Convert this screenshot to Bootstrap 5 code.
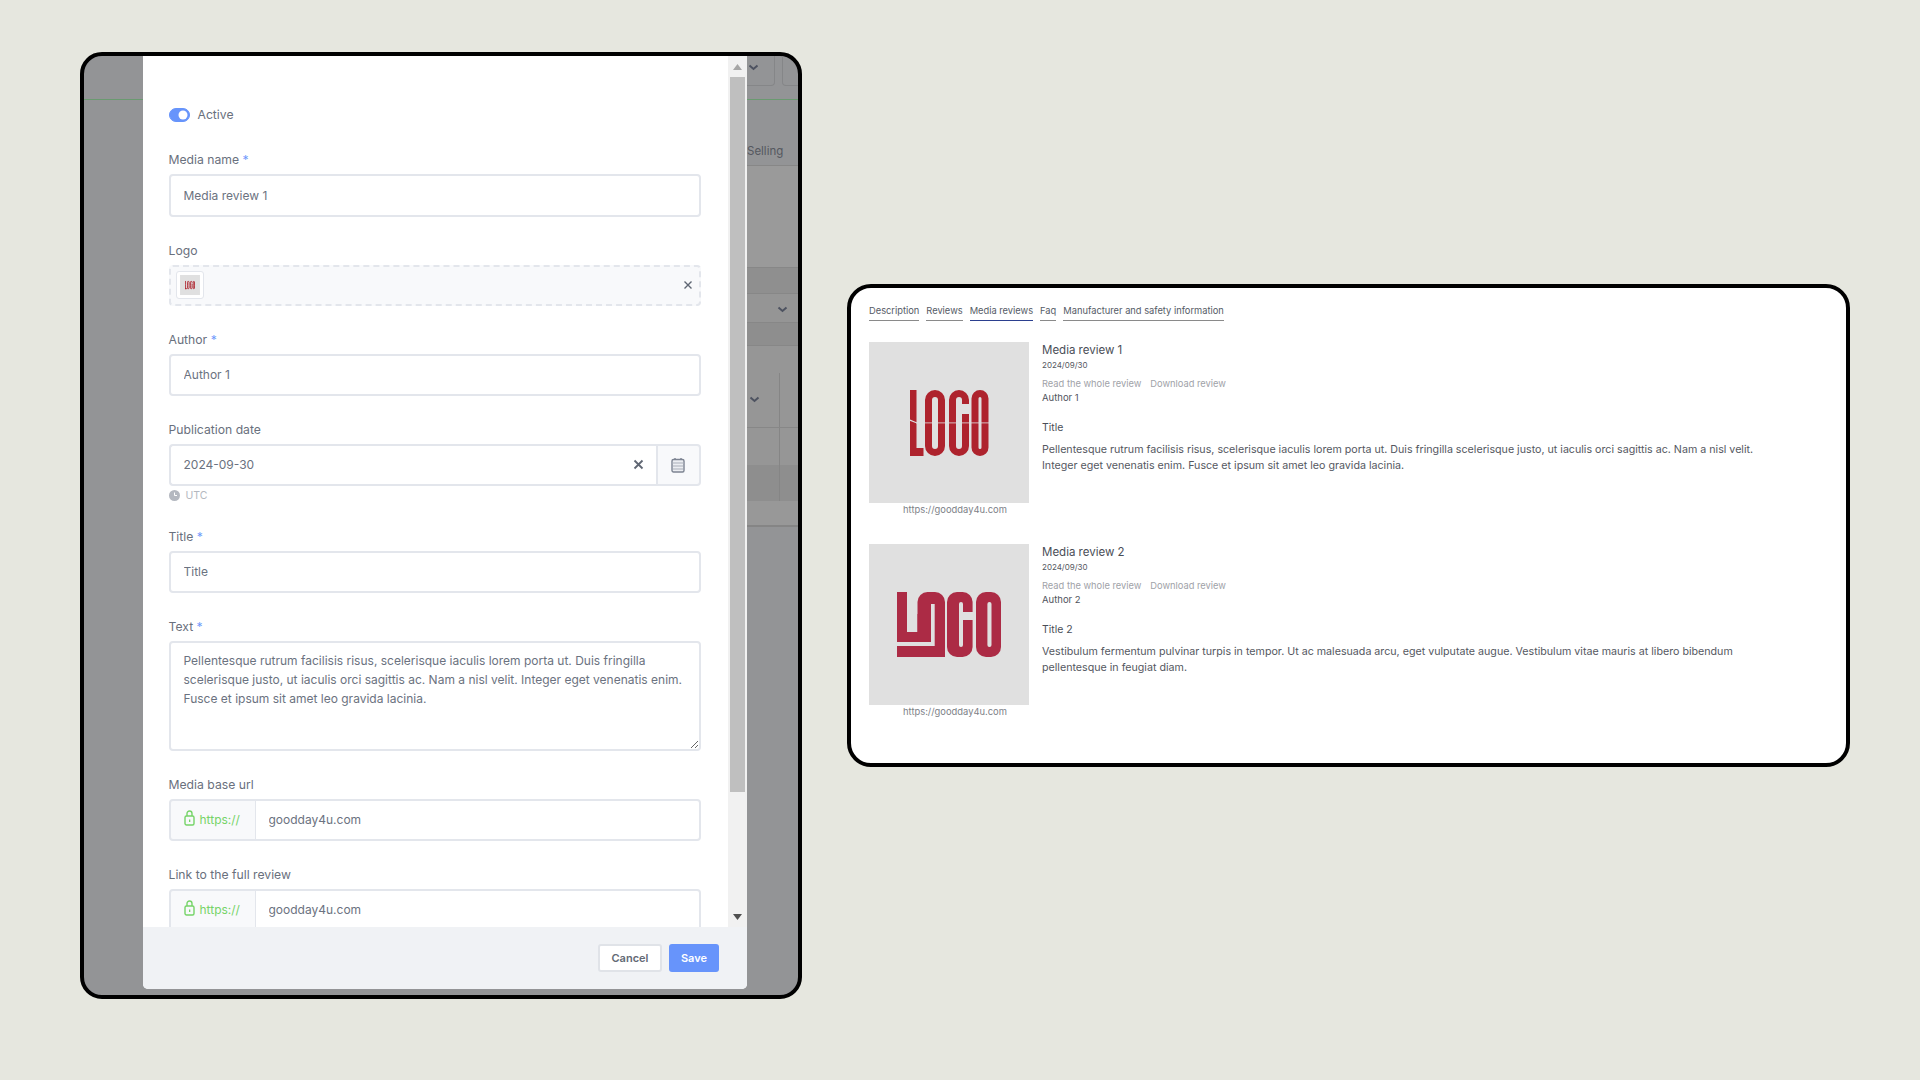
<!DOCTYPE html>
<html lang="en">
<head>
<meta charset="utf-8">
<title>Media reviews</title>
<link href="https://cdn.jsdelivr.net/npm/bootstrap@5.3.0/dist/css/bootstrap.min.css" rel="stylesheet">
<style>
html,body{height:1080px;overflow:hidden}
body{background:#e6e7df;font-family:"Inter","Liberation Sans",sans-serif;color:#444}
.stage{height:1080px;padding:0 70px 29px 80px}
.shell-l{width:722px;height:947px;border:4px solid #000;border-radius:22px;overflow:hidden;background:#939496;flex:none}
.side-l{width:59px;flex:none}
.band-top{height:44px;border-bottom:1px solid #6a9a70}
.dlg{width:604px;flex:none;height:933px;background:#fff;border-radius:0 0 5px 5px;overflow:hidden}
.dlg-scroll{height:871px;overflow:hidden}
.dlg-form{width:585px;padding:48.5px 0 0 25.5px;overflow:hidden}
.dlg-form>*{width:532px}
.sbar{width:19px;background:#f1f1f1;padding:0 2px 0 2px}
.sbar-thumb{height:715px;background:#bfbfbf;width:15px}
.sbar-up,.sbar-dn{height:21px;width:15px}
.sbar-gap{flex:1}
.dlg-foot{height:62px;background:#f0f2f5;padding:17px 28px 0 0}
.fld{margin-bottom:24px}
.fld-lab{font-size:12.2px;line-height:20px;margin-bottom:4px;color:#69707d;font-weight:400;display:block}
.req{color:#6d97fb}
.sw-row{height:20px;margin-bottom:25px;font-size:12.2px;color:#69707d;line-height:20px}
.sw-row .form-check-input{width:21px;height:14px;margin:0;float:none;background-color:#6794fb;border-color:#6794fb}
.sw-row.form-switch{padding-left:0;min-height:0}
.form-control.ctl,.ctl{height:42px;font-size:12px;color:#6b7280;border:2px solid #e3e6ec;border-radius:4px;padding:0 13px;box-shadow:none}
.form-control.ctl.ctl-tall{height:43px}
textarea.form-control.ctl{height:110px;line-height:19px;padding:8px 13px 6px;font-size:12px;color:#6b7280}
.drop{height:41px;border:2px dashed #e3e6ec;background:#f8f9fb;border-radius:4px;padding:0 6px 0 5px}
.thumb{width:28px;height:28px;border:1px solid #e3e6ec;border-radius:3px;background:#fff;padding:3px}
.ig-clear{background:#fff;border:2px solid #e3e6ec;border-left:0;padding:0 12px 0 4px}
.ig-cal{background:#f8f9fb;border:2px solid #e3e6ec;border-left:1px solid #e3e6ec;width:44px;justify-content:center;padding:0;border-radius:0 4px 4px 0}
.ig-date .ctl{border-right:0}
.ig-http{background:#f8f9fb;border:2px solid #e3e6ec;width:88px;padding:0 0 0 13px;gap:5px;font-size:12px;color:#76d468;border-radius:4px 0 0 4px}
.ig-http svg{margin-top:-3px}
.ig-url .ctl{border-left:0}
.utc{height:20px;margin-bottom:21px;font-size:10.5px;color:#b4b8c0;gap:6px}
.btn-x{font-size:11px;font-weight:600;height:28px;width:64px;padding:0;border-radius:3px}
.btn-cancel{background:#fff;border:2px solid #e0e3e8;color:#636a75}
.btn-save{background:#6794fb;border:0;color:#fff;width:50px;margin-left:7px}
.side-r{flex:1;overflow:hidden;font-size:11.5px}
.br1{height:44px;border-bottom:1px solid #6a9a70}
.ddbox{width:48px;height:30px;border:1px solid #858688;border-top:0;border-radius:0 0 4px 4px;flex:none;margin-left:-20px;padding:0 0 6px 20px}
.ddbox2{margin-left:7px;padding:0}
.br2{height:66px;padding:41px 0 0 0;border-bottom:1px solid #878787;color:#55585f;white-space:nowrap;line-height:20px}
.br3{height:102px;background:#9a9a9a;border-bottom:1px solid #878787}
.br4{height:26px;background:#8f8f8f;border-bottom:1px solid #878787}
.br5{height:29px;background:#959595;border-bottom:1px solid #878787;padding:3px 0 0 30px}
.br6{height:23px;background:#8e8e8e;border-bottom:1px solid #878787}
.br7{height:82px;background:#969696;border-bottom:1px solid #878787;padding-top:27px}
.vl{width:33px;border-right:1px solid #858585}
.vl-a{height:54px;padding:23px 0 0 2px}
.vl-b{height:100%}
.br8{height:37px;background:#969696}
.br9{height:36px;background:#8e8e8e}
.br10{height:26px;background:#989898;border-bottom:2px solid #858585}
.chev{width:11px;height:7px;display:block}
.shell-r{width:1003px;height:483px;border:4px solid #000;border-radius:24px;background:#fff;padding:16px 0 0 18px;flex:none;overflow:hidden}
.tabrow{gap:7px;margin-bottom:21px}
.tabit{font-size:9.3px;line-height:14px;color:#555b66;padding-bottom:2px;border-bottom:1px solid #8a8a8a;text-decoration:none}
.tabit.sel{border-bottom-color:#2b3f8f}
.rev{gap:13px;margin-bottom:28px}
.rev-l{width:160px;flex:none}
.rev-pic{width:160px;height:161px;background:#e0e0e0;display:block}
.rev-url{font-size:9.4px;line-height:12px;color:#7d8187;margin:1px 0 0 34px;white-space:nowrap}
.rev-r{width:730px}
.rev-name{font-size:11.5px;line-height:16px;color:#4a4e57}
.rev-date{font-size:8px;line-height:12px;margin-top:1px;color:#55585f}
.rev-links{font-size:9.3px;line-height:12px;margin-top:7px;gap:9px}
.rev-links a{color:#a0a2a8;text-decoration:none}
.rev-auth{font-size:9.5px;line-height:13px;color:#50545c;margin-top:1px}
.rev-title{font-size:10.5px;line-height:14px;margin-top:17px;color:#4a4e57}
.rev-text{font-size:10.68px;line-height:16px;margin-top:7px;color:#55585f}
</style>
</head>
<body>
<svg width="0" height="0" class="d-none" aria-hidden="true">
  <symbol id="logo-one" viewBox="0 0 160 161">
    <rect width="160" height="161" fill="#e0e0e0"/>
    <g fill="#ae232d">
      <rect x="41" y="48" width="6.500" height="66"/><rect x="41" y="106" width="13.5" height="8"/>
    </g>
    <g fill="none" stroke="#ae232d" stroke-width="7">
      <rect x="59.500" y="51.500" width="13" height="59" rx="6.500"/>
      <rect x="83.500" y="51.500" width="13" height="59" rx="6.500"/>
      <rect x="106" y="51.500" width="10" height="59" rx="5"/>
    </g>
    <rect x="92" y="62" width="9" height="10" fill="#e0e0e0"/>
    <rect x="47" y="80.500" width="75" height="0.800" fill="#e0e0e0"/>
    <polygon points="40,77 48,80.500 48,81.500 40,78.500" fill="#e0e0e0"/>
  </symbol>
  <symbol id="logo-two" viewBox="0 0 160 161">
    <rect width="160" height="161" fill="#e0e0e0"/>
    <g fill="#ac2b45">
      <rect x="28" y="48" width="10" height="50"/><rect x="28" y="88" width="34" height="10"/>
      <rect x="28" y="102" width="48" height="11"/>
      <rect x="48.500" y="48" width="27.500" height="60" rx="10"/><rect x="48.500" y="70" width="13.500" height="28"/><rect x="66" y="90" width="10" height="23"/>
      <rect x="78" y="48" width="25.600" height="65" rx="10"/>
      <rect x="107" y="48" width="25" height="65" rx="10"/>
    </g>
    <g fill="#e0e0e0">
      <rect x="62" y="60" width="3.700" height="42"/><rect x="28" y="98" width="37" height="4"/>
      <rect x="90" y="58" width="4" height="45" rx="2"/><rect x="93" y="68" width="11" height="8"/>
      <rect x="118.400" y="58" width="4.100" height="45" rx="2"/>
    </g>
  </symbol>
  <symbol id="chv" viewBox="0 0 11 7"><polyline points="1.500,1.500 5.500,5 9.500,1.500" fill="none" stroke="#4d5260" stroke-width="2"/></symbol>
  <symbol id="lk" viewBox="0 0 11 16"><rect x="1" y="6" width="9" height="9" rx="1.500" fill="none" stroke="#76d468" stroke-width="1.400"/><path d="M3 6V3.500a2.500 2.500 0 0 1 5 0V6" fill="none" stroke="#76d468" stroke-width="1.400"/><rect x="5" y="9.500" width="1.300" height="2.500" fill="#76d468"/></symbol>
</svg>
<main class="stage d-flex justify-content-between align-items-center">
  <section class="shell-l d-flex">
    <div class="side-l"><div class="band-top"></div></div>
    <div class="dlg d-flex flex-column">
      <div class="dlg-scroll d-flex">
        <form class="dlg-form">
          <div class="form-check form-switch sw-row d-flex align-items-center gap-2">
            <input class="form-check-input" type="checkbox" role="switch" id="act" checked>
            <label for="act">Active</label>
          </div>
          <div class="fld"><label class="fld-lab">Media name <span class="req">*</span></label>
            <input class="form-control ctl ctl-tall" value="Media review 1"></div>
          <div class="fld"><label class="fld-lab">Logo</label>
            <div class="drop d-flex align-items-center justify-content-between">
              <div class="thumb"><svg width="20" height="20" class="d-block"><use href="#logo-one"/></svg></div>
              <svg width="10" height="10" viewBox="0 0 10 10"><path d="M1.500 1.500l7 7M8.500 1.500l-7 7" stroke="#5f6673" stroke-width="1.400"/></svg>
            </div></div>
          <div class="fld"><label class="fld-lab">Author <span class="req">*</span></label>
            <input class="form-control ctl" value="Author 1"></div>
          <div><label class="fld-lab">Publication date</label>
            <div class="input-group ig-date">
              <input class="form-control ctl" value="2024-09-30">
              <span class="input-group-text ig-clear"><svg width="11" height="11" viewBox="0 0 11 11"><path d="M1.500 1.500l8 8M9.500 1.500l-8 8" stroke="#5f6673" stroke-width="1.800"/></svg></span>
              <span class="input-group-text ig-cal"><svg width="14" height="16" viewBox="0 0 14 16"><rect x="1" y="2.500" width="12" height="12.500" rx="1.500" fill="#eceef2" stroke="#7d8492" stroke-width="1.400"/><path d="M1 6h12M2 9h10M2 12h10" stroke="#a9aeb8"/><path d="M4 1v2M10 1v2" stroke="#7d8492" stroke-width="1.400"/></svg></span>
            </div></div>
          <div class="utc d-flex align-items-center"><svg width="11" height="11" viewBox="0 0 11 11"><circle cx="5.500" cy="5.500" r="5.500" fill="#b4b8c0"/><path d="M5.500 2.500v3h2.500" fill="none" stroke="#fff"/></svg><span>UTC</span></div>
          <div class="fld"><label class="fld-lab">Title <span class="req">*</span></label>
            <input class="form-control ctl" value="Title"></div>
          <div class="fld"><label class="fld-lab">Text <span class="req">*</span></label>
            <textarea class="form-control ctl">Pellentesque rutrum facilisis risus, scelerisque iaculis lorem porta ut. Duis fringilla scelerisque justo, ut iaculis orci sagittis ac. Nam a nisl velit. Integer eget venenatis enim. Fusce et ipsum sit amet leo gravida lacinia.</textarea></div>
          <div class="fld"><label class="fld-lab">Media base url</label>
            <div class="input-group ig-url"><span class="input-group-text ig-http"><svg width="11" height="16"><use href="#lk"/></svg>https://</span>
              <input class="form-control ctl" value="goodday4u.com"></div></div>
          <div class="fld"><label class="fld-lab">Link to the full review</label>
            <div class="input-group ig-url"><span class="input-group-text ig-http"><svg width="11" height="16"><use href="#lk"/></svg>https://</span>
              <input class="form-control ctl" value="goodday4u.com"></div></div>
        </form>
        <div class="sbar d-flex flex-column">
          <div class="sbar-up d-flex align-items-center justify-content-center"><svg width="9" height="6"><polygon points="4.500,0 9,6 0,6" fill="#a6a6a6"/></svg></div>
          <div class="sbar-thumb"></div>
          <div class="sbar-gap"></div>
          <div class="sbar-dn d-flex align-items-center justify-content-center"><svg width="9" height="6"><polygon points="0,0 9,0 4.500,6" fill="#505050"/></svg></div>
        </div>
      </div>
      <div class="dlg-foot d-flex justify-content-end align-items-start">
        <button type="button" class="btn btn-x btn-cancel">Cancel</button>
        <button type="button" class="btn btn-x btn-save">Save</button>
      </div>
    </div>
    <div class="side-r">
      <div class="br1 d-flex">
        <div class="ddbox d-flex align-items-center"><svg class="chev"><use href="#chv"/></svg></div>
        <div class="ddbox ddbox2"></div>
      </div>
      <div class="br2">Selling</div>
      <div class="br3"></div>
      <div class="br4"></div>
      <div class="br5 d-flex align-items-center"><svg class="chev"><use href="#chv"/></svg></div>
      <div class="br6"></div>
      <div class="br7"><div class="vl vl-a"><svg class="chev"><use href="#chv"/></svg></div></div>
      <div class="br8"><div class="vl vl-b"></div></div>
      <div class="br9"><div class="vl vl-b"></div></div>
      <div class="br10"></div>
    </div>
  </section>

  <section class="shell-r">
    <nav class="tabrow d-flex">
      <a class="tabit" href="#">Description</a>
      <a class="tabit" href="#">Reviews</a>
      <a class="tabit sel" href="#">Media reviews</a>
      <a class="tabit" href="#">Faq</a>
      <a class="tabit" href="#">Manufacturer and safety information</a>
    </nav>
    <article class="rev d-flex">
      <div class="rev-l"><svg class="rev-pic"><use href="#logo-one"/></svg><div class="rev-url">https://goodday4u.com</div></div>
      <div class="rev-r">
        <div class="rev-name">Media review 1</div>
        <div class="rev-date">2024/09/30</div>
        <div class="rev-links d-flex"><a href="#">Read the whole review</a><a href="#">Download review</a></div>
        <div class="rev-auth">Author 1</div>
        <div class="rev-title">Title</div>
        <div class="rev-text">Pellentesque rutrum facilisis risus, scelerisque iaculis lorem porta ut. Duis fringilla scelerisque justo, ut iaculis orci sagittis ac. Nam a nisl velit. Integer eget venenatis enim. Fusce et ipsum sit amet leo gravida lacinia.</div>
      </div>
    </article>
    <article class="rev d-flex">
      <div class="rev-l"><svg class="rev-pic"><use href="#logo-two"/></svg><div class="rev-url">https://goodday4u.com</div></div>
      <div class="rev-r">
        <div class="rev-name">Media review 2</div>
        <div class="rev-date">2024/09/30</div>
        <div class="rev-links d-flex"><a href="#">Read the whole review</a><a href="#">Download review</a></div>
        <div class="rev-auth">Author 2</div>
        <div class="rev-title">Title 2</div>
        <div class="rev-text">Vestibulum fermentum pulvinar turpis in tempor. Ut ac malesuada arcu, eget vulputate augue. Vestibulum vitae mauris at libero bibendum pellentesque in feugiat diam.</div>
      </div>
    </article>
  </section>
</main>
<script src="https://cdn.jsdelivr.net/npm/bootstrap@5.3.0/dist/js/bootstrap.bundle.min.js"></script>
</body>
</html>
